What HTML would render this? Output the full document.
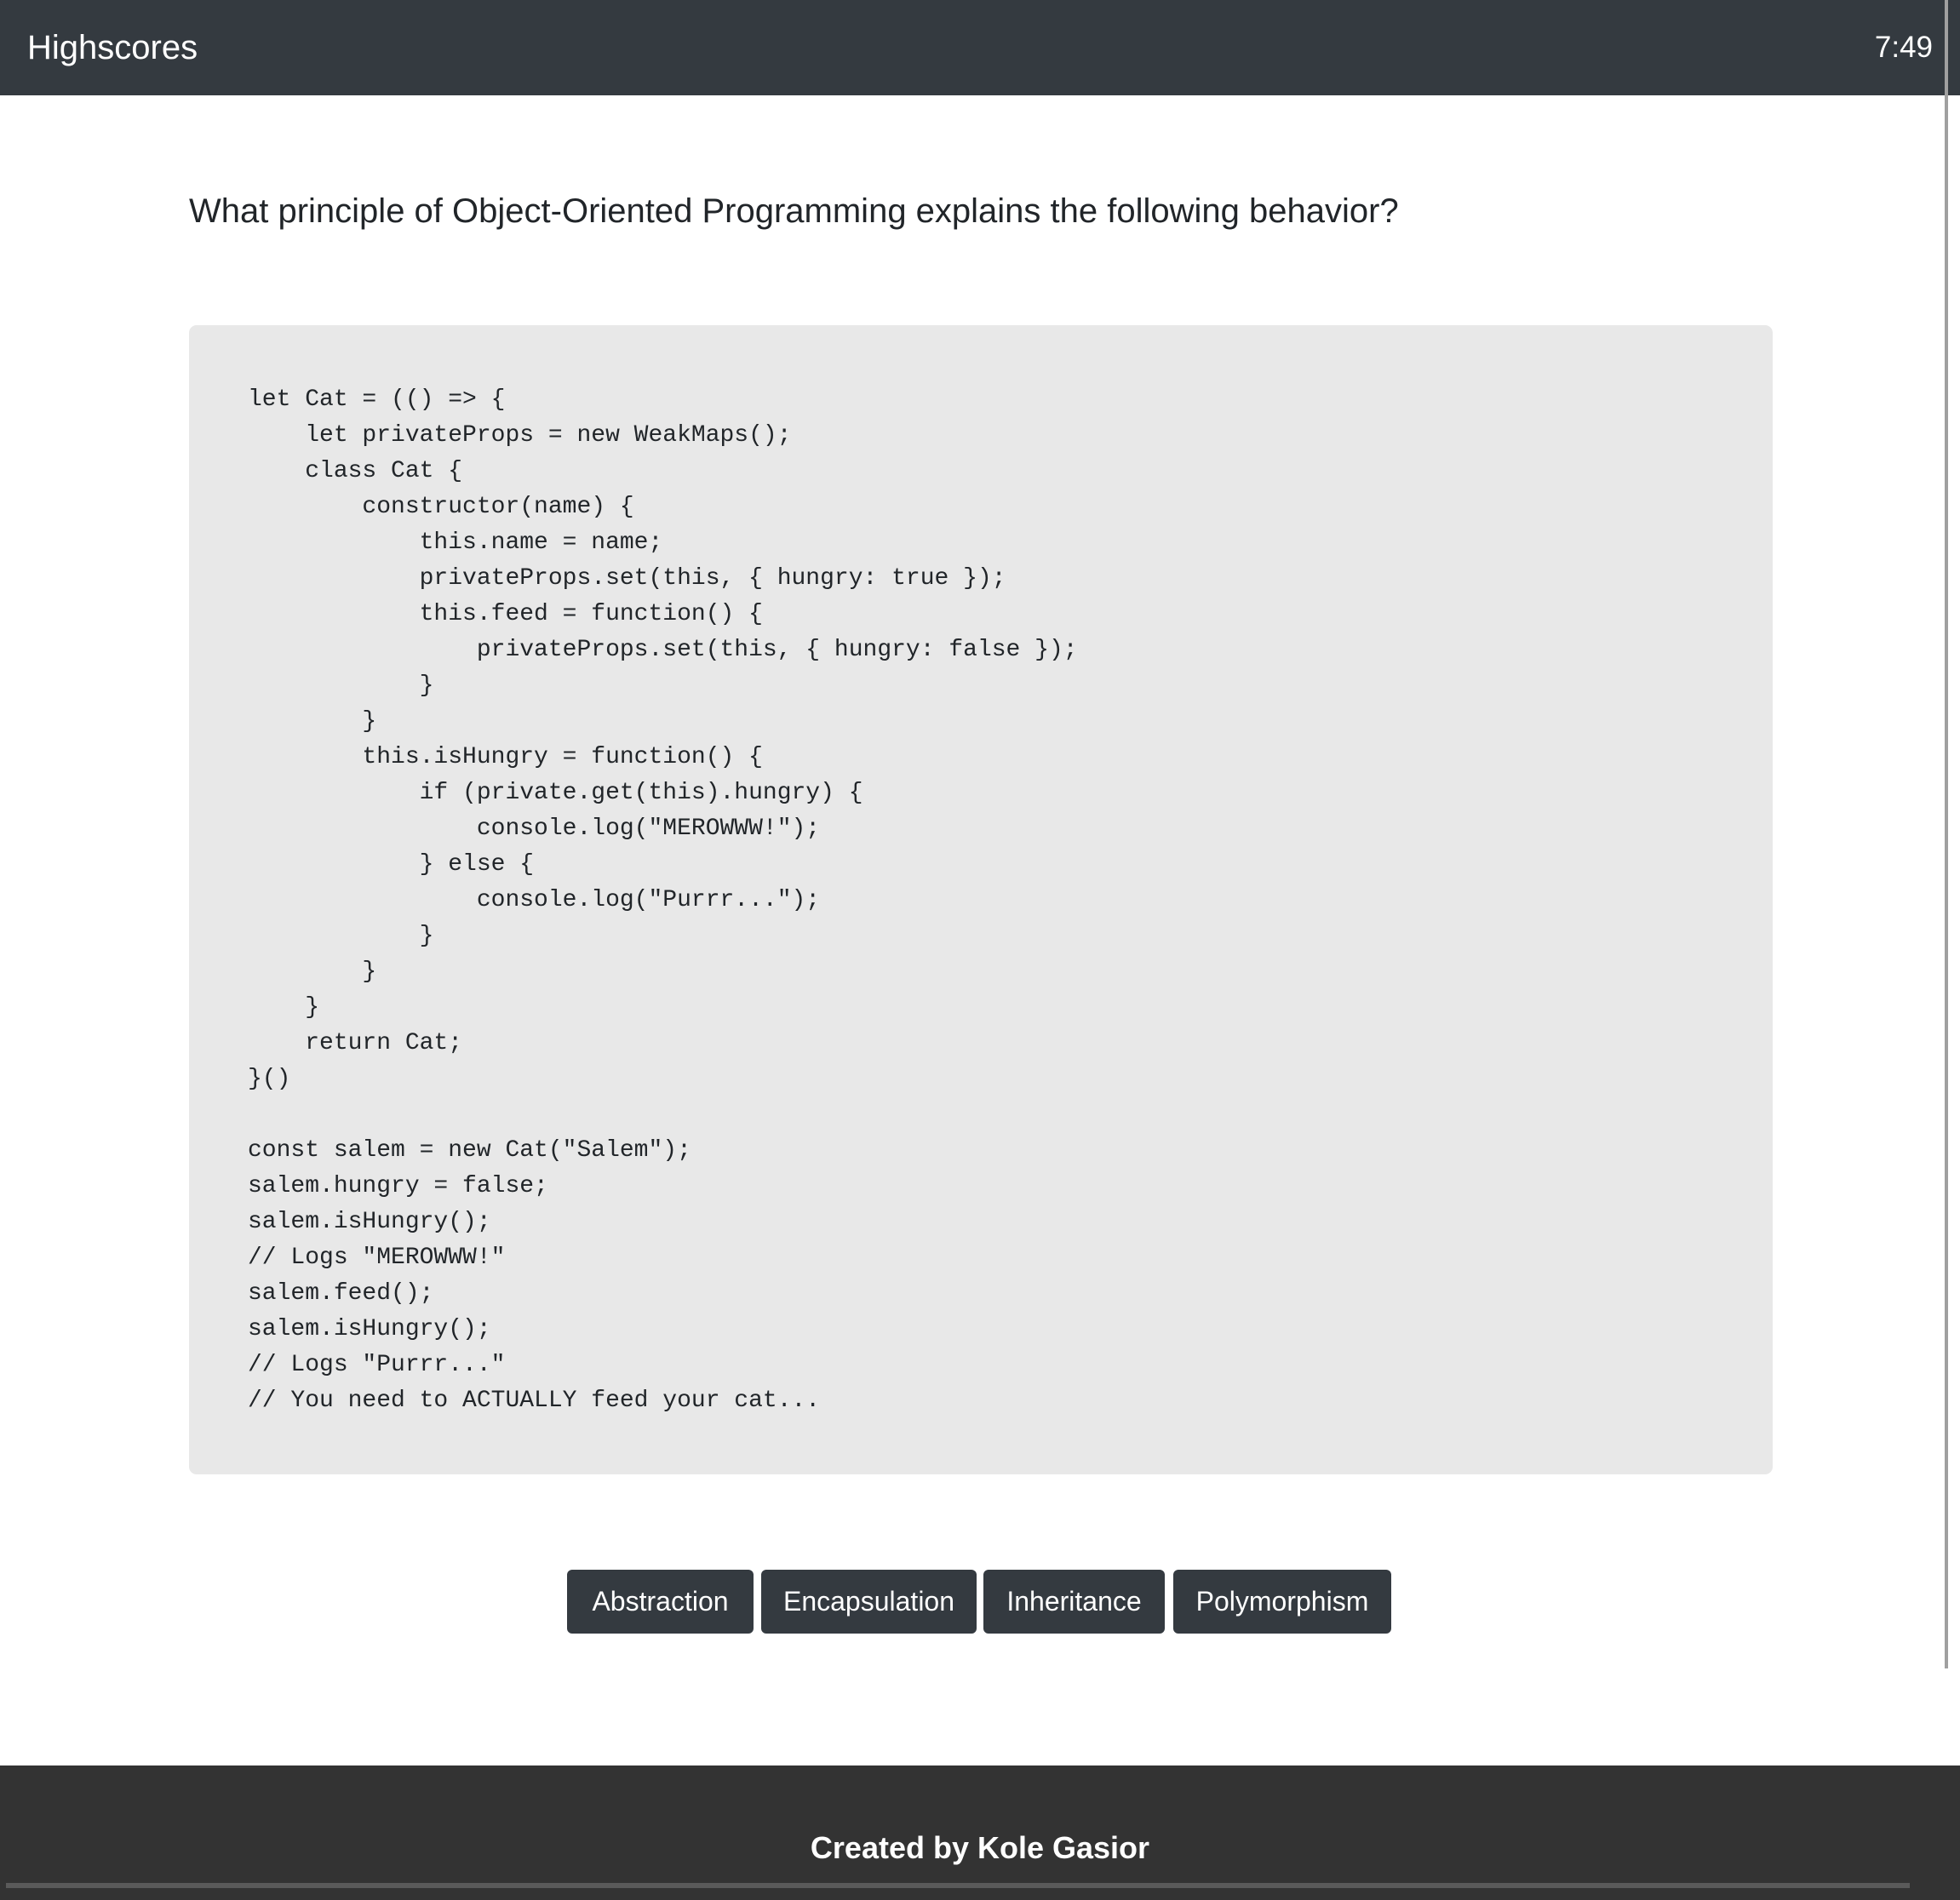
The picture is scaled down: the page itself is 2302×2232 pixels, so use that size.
<!DOCTYPE html>
<html><head><meta charset="utf-8"><style>
*{margin:0;padding:0;box-sizing:border-box}
body{width:2302px;height:2232px;position:relative;background:#fff;font-family:"Liberation Sans",sans-serif;overflow:hidden}
.hdr{position:absolute;left:0;top:0;width:2302px;height:112px;background:#343a40;color:#fff;font-size:40px}
.hdr .t{position:absolute;left:32px;top:34px}
.hdr .c{position:absolute;right:32px;top:36px;font-size:35px}
.q{position:absolute;left:222px;top:226px;font-size:40px;color:#212529}
.code{position:absolute;left:222px;top:382px;width:1860px;height:1350px;background:#e8e8e8;border-radius:9px}
pre{position:absolute;left:291px;top:449px;font-family:"Liberation Mono","DejaVu Sans Mono",monospace;font-size:28px;line-height:42px;color:#212529}
.b{position:absolute;top:1844px;height:75px;background:#343a40;color:#fff;border-radius:6px;font-size:32px;text-align:center;line-height:75px}
.ft{position:absolute;left:0;top:2074px;width:2302px;height:158px;background:#333}
.ft .t{position:absolute;left:0;right:0;top:76px;text-align:center;color:#fff;font-weight:bold;font-size:36px}
.bar{position:absolute;left:7px;top:2212px;width:2236px;height:6px;background:#5a5a5a}
.vs{position:absolute;left:2284px;top:0;width:4px;height:1960px;background:#a0a0a0}
</style></head><body>
<div class="hdr"><span class="t">Highscores</span><span class="c">7:49</span></div>
<div class="q">What principle of Object-Oriented Programming explains the following behavior?</div>
<div class="code"></div>
<pre>let Cat = (() =&gt; {
    let privateProps = new WeakMaps();
    class Cat {
        constructor(name) {
            this.name = name;
            privateProps.set(this, { hungry: true });
            this.feed = function() {
                privateProps.set(this, { hungry: false });
            }
        }
        this.isHungry = function() {
            if (private.get(this).hungry) {
                console.log("MEROWWW!");
            } else {
                console.log("Purrr...");
            }
        }
    }
    return Cat;
}()

const salem = new Cat("Salem");
salem.hungry = false;
salem.isHungry();
// Logs "MEROWWW!"
salem.feed();
salem.isHungry();
// Logs "Purrr..."
// You need to ACTUALLY feed your cat...</pre>
<div class="b" style="left:666px;width:219px">Abstraction</div>
<div class="b" style="left:894px;width:253px">Encapsulation</div>
<div class="b" style="left:1155px;width:213px">Inheritance</div>
<div class="b" style="left:1378px;width:256px">Polymorphism</div>
<div class="ft"><div class="t">Created by Kole Gasior</div></div>
<div class="bar"></div>
<div class="vs"></div>
</body></html>
